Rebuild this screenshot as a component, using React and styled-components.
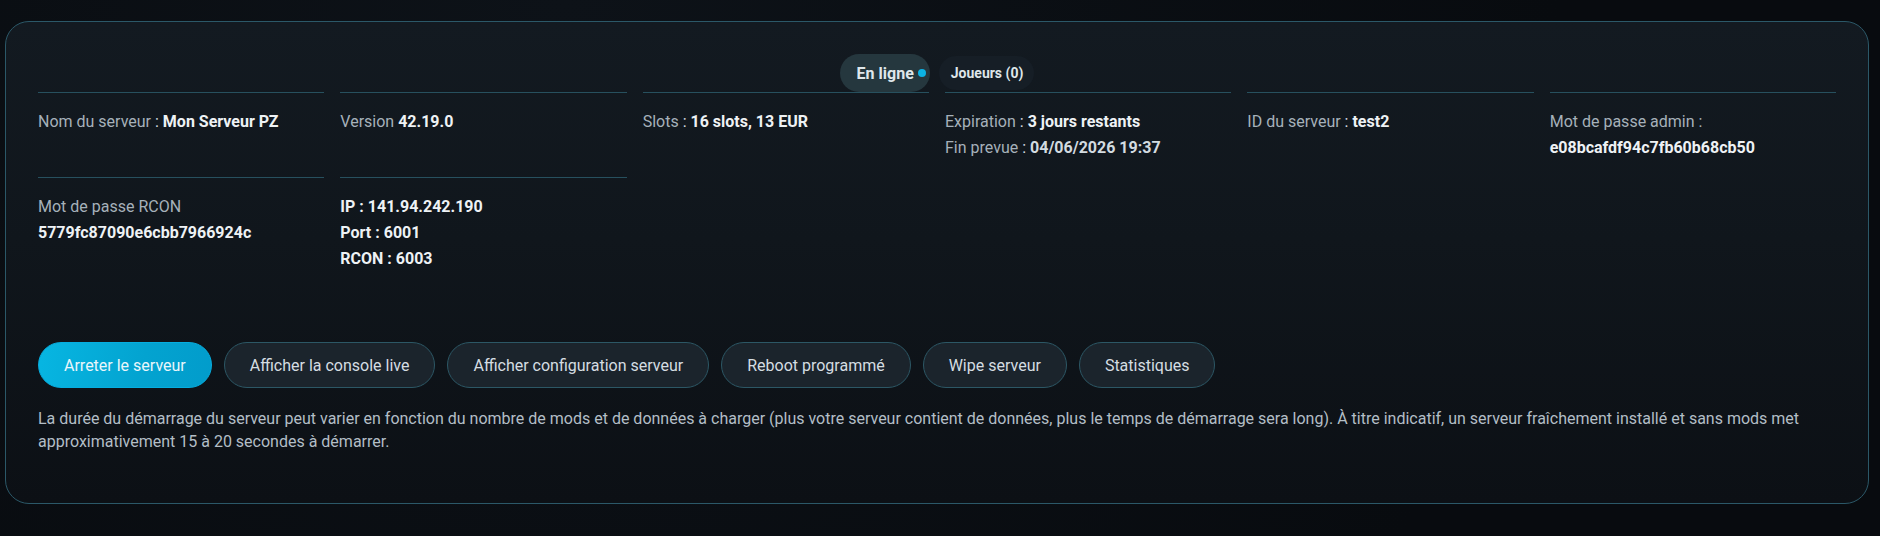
import React from "react";
import styled, { createGlobalStyle } from "styled-components";

const GlobalStyle = createGlobalStyle`
  html, body {
    margin: 0;
    padding: 0;
    background: #080b0f;
  }
  body {
    font-family: Roboto, "Noto Sans", "Liberation Sans", sans-serif;
    color: #e8eef2;
  }
`;

const Page = styled.div`
  padding: 21px 11px 32px 5px;
  background: radial-gradient(circle at 30% 0%, #0d1218 0%, #080b0f 70%);
`;

const Card = styled.section`
  border: 1px solid #2b5868;
  border-radius: 24px;
  background: linear-gradient(180deg, #131a21 0%, #10161c 45%, #0c1015 100%);
  padding: 32px;
`;

const BadgeRow = styled.div`
  display: flex;
  justify-content: center;
  align-items: center;
  gap: 9px;
  height: 38px;
`;

const StatusBadge = styled.div`
  display: flex;
  align-items: center;
  gap: 4px;
  height: 38px;
  padding: 0 4px 0 17px;
  border-radius: 19px;
  background: #25373e;
  color: #dfe7eb;
  font-size: 16px;
  font-weight: 700;
`;

const Dot = styled.span`
  width: 8px;
  height: 8px;
  border-radius: 50%;
  background: #0cb2e4;
`;

const PlayersBadge = styled.div`
  display: flex;
  align-items: center;
  height: 34px;
  padding: 0 11px 0 12px;
  border-radius: 17px;
  background: #161e26;
  color: #dfe6ea;
  font-size: 14px;
  font-weight: 700;
`;

const InfoGrid = styled.div`
  display: grid;
  grid-template-columns: repeat(6, 1fr);
  column-gap: 16px;
  row-gap: 16px;
  align-items: start;
`;

const Cell = styled.div`
  border-top: 1px solid #27505e;
  padding-top: 16px;
  font-size: 16px;
  line-height: 26px;
`;

const Line = styled.div`
  color: ${(p) => (p.$strong ? "#eef2f5" : "#a6b1ba")};
  font-weight: ${(p) => (p.$strong ? 700 : 400)};
  white-space: nowrap;
`;

const Sep = styled.span`
  color: #d6dde2;
`;

const Value = styled.b`
  color: ${(p) => (p.$dim ? "#d3dbe0" : "#eef2f5")};
  font-weight: 700;
`;

const Actions = styled.div`
  display: flex;
  gap: 12px;
  margin-top: 70px;
`;

const Button = styled.button`
  height: 46px;
  padding: 0 25px;
  border-radius: 23px;
  font-family: inherit;
  font-size: 16px;
  cursor: pointer;
  border: 1px solid ${(p) => (p.$primary ? "#06aee0" : "#2c5765")};
  background: ${(p) =>
    p.$primary ? "linear-gradient(100deg, #07b6e2 0%, #03a3d0 60%, #029ccb 100%)" : "#1b242c"};
  color: ${(p) => (p.$primary ? "#eaf6fb" : "#d5dde2")};
`;

const Note = styled.p`
  margin: 19px 0 18px;
  font-size: 16px;
  line-height: 23px;
  color: #b3bec6;
`;

function Field({ label, value, sep = " : ", dim }) {
  return (
    <Line>
      {label}
      <Sep>{sep}</Sep>
      <Value $dim={dim}>{value}</Value>
    </Line>
  );
}

export default function App() {
  return (
    <>
      <GlobalStyle />
      <Page>
        <Card>
          <BadgeRow>
            <StatusBadge>
              En ligne <Dot />
            </StatusBadge>
            <PlayersBadge>Joueurs (0)</PlayersBadge>
          </BadgeRow>

          <InfoGrid>
            <Cell>
              <Field label="Nom du serveur" value="Mon Serveur PZ" />
            </Cell>
            <Cell>
              <Field label="Version" sep=" " value="42.19.0" />
            </Cell>
            <Cell>
              <Field label="Slots" value="16 slots, 13 EUR" />
            </Cell>
            <Cell>
              <Field label="Expiration" value="3 jours restants" />
              <Field label="Fin prevue" value="04/06/2026 19:37" dim />
            </Cell>
            <Cell>
              <Field label="ID du serveur" value="test2" />
            </Cell>
            <Cell>
              <Line>Mot de passe admin :</Line>
              <Line $strong>e08bcafdf94c7fb60b68cb50</Line>
            </Cell>
            <Cell>
              <Line>Mot de passe RCON</Line>
              <Line $strong>5779fc87090e6cbb7966924c</Line>
            </Cell>
            <Cell>
              <Line $strong>IP : 141.94.242.190</Line>
              <Line $strong>Port : 6001</Line>
              <Line $strong>RCON : 6003</Line>
            </Cell>
          </InfoGrid>

          <Actions>
            <Button $primary>Arreter le serveur</Button>
            <Button>Afficher la console live</Button>
            <Button>Afficher configuration serveur</Button>
            <Button>Reboot programmé</Button>
            <Button>Wipe serveur</Button>
            <Button>Statistiques</Button>
          </Actions>

          <Note>
            La durée du démarrage du serveur peut varier en fonction du nombre de mods et de données à
            charger (plus votre serveur contient de données, plus le temps de démarrage sera long). À titre
            indicatif, un serveur fraîchement installé et sans mods met approximativement 15 à 20 secondes
            à démarrer.
          </Note>
        </Card>
      </Page>
    </>
  );
}
